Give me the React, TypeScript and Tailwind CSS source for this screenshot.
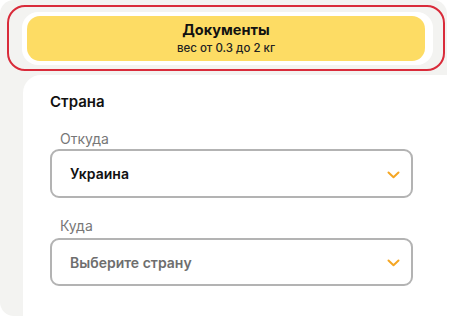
import React from "react";

function Chevron() {
  return (
    <svg width="13" height="8" viewBox="0 0 13 8" fill="none" className="shrink-0 mt-[2px]">
      <path d="M1.5 1.5L6.5 6.2L11.5 1.5" stroke="#f5a623" strokeWidth="2" strokeLinecap="round" strokeLinejoin="round" />
    </svg>
  );
}

export default function App() {
  return (
    <div
      className="relative w-[453px] h-[317px] overflow-hidden bg-white"
      style={{ fontFamily: "Inter, 'Noto Sans', sans-serif" }}
    >
      <div className="w-[447px] h-[316px] rounded-[14px] bg-[#f3f3f1] flex flex-col pt-[12px]">
        <div className="ml-[22px] w-[411px] h-[53px] rounded-[16px] bg-white p-[4px] pl-[5px] pr-[8px]">
          <div className="h-full rounded-[13px] bg-[#fddc64] flex flex-col items-center justify-center">
            <div className="text-[14.5px] leading-[18px] font-bold text-[#111]">Документы</div>
            <div className="text-[11.5px] leading-[15px] font-medium text-[#222] mt-[2px]">вес от 0.3 до 2 кг</div>
          </div>
        </div>
        <div className="ml-[23px] mt-[10px] w-[430px] flex-1 bg-white rounded-tl-[18px] pl-[27px] pr-[40px] pt-[17px]">
          <div className="text-[15px] leading-[20px] font-semibold text-[#111]">Страна</div>
          <div className="mt-[17px] pl-[10px] text-[14px] leading-[20px] text-[#777]">Откуда</div>
          <div className="w-[363px] h-[49px] border-2 border-[#b3b3b3] rounded-[9px] flex items-center justify-between pl-[18px] pr-[11px]">
            <span className="text-[14px] font-semibold text-[#111]">Украина</span>
            <Chevron />
          </div>
          <div className="mt-[18px] pl-[10px] text-[14px] leading-[20px] text-[#777]">Куда</div>
          <div className="mt-[2px] w-[363px] h-[48px] border-2 border-[#b3b3b3] rounded-[9px] flex items-center justify-between pl-[18px] pr-[11px]">
            <span className="text-[14px] font-semibold text-[#6e6e6e]">Выберите страну</span>
            <Chevron />
          </div>
        </div>
      </div>
      <div className="absolute left-[7px] top-[5px] w-[438px] h-[66px] border-[2.5px] border-[#d92b3a] rounded-[18px] pointer-events-none" />
    </div>
  );
}
